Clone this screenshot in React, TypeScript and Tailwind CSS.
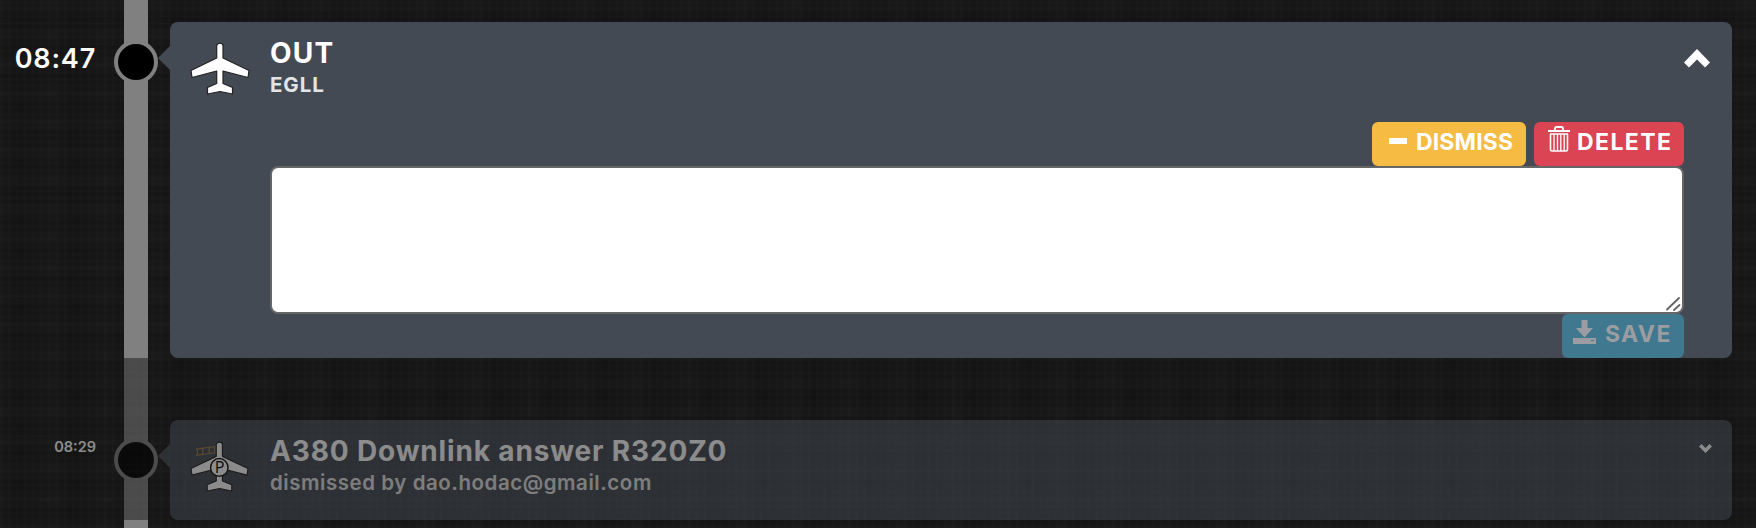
import type { ReactNode } from "react";

function Plane({ parked = false }: { parked?: boolean }) {
  return (
    <svg
      width={parked ? 59 : 60}
      height={parked ? 52 : 54}
      viewBox="0 0 60 54"
      preserveAspectRatio="none"
      className={parked ? "mr-px block shrink-0" : "block shrink-0"}
    >
      {parked && (
        <path
          d="M6 9.500 28 6.500M6 16 28 13M7.500 9V16.500M13 8.500V15.500M19.500 7.500V14.500M25 7V14"
          stroke="#a07c4c"
          strokeWidth="1.200"
          fill="none"
        />
      )}
      <path
        d="M26.700 5C26.700 1.300 33 1.300 33 5V17L59 29.500 58 36.500 33 30V42.500L42.500 46.500V53L30 50.500 17.500 53V46.500L26.700 42.500V30L2 36.500 1 29.500 26.700 17Z"
        fill="#fff"
        stroke="#222"
        strokeWidth="1.2"
        strokeLinejoin="round"
      />
      {parked && (
        <>
          <ellipse cx="29.800" cy="28.500" rx="8.900" ry="9.200" fill="#fff" stroke="#111" strokeWidth="1.500" />
          <text x="30.200" y="34.500" textAnchor="middle" fontSize="16.5" fontFamily="Open Sans, sans-serif" fill="#000">
            P
          </text>
        </>
      )}
    </svg>
  );
}

function Entry({ time, timeClass, dim, children }: { time: string; timeClass: string; dim?: boolean; children: ReactNode }) {
  return (
    <section className={dim ? "flex pt-[62px] opacity-50" : "flex pt-[22px]"}>
      <div className={`w-[124px] pr-7 text-right whitespace-nowrap ${timeClass}`}>{time}</div>
      <div className={dim ? "-mt-[62px] w-6 bg-[#808080] pt-20" : "-mt-[22px] w-6 bg-[#808080] pt-10"}>
        <div className="-ml-[10px] size-11 rounded-full border-4 border-[#808080] bg-black" />
      </div>
      <svg width="12" height="24" viewBox="0 0 12 24" className="mt-6 ml-[10px] shrink-0">
        <path d="M12 0V24L0 12Z" fill="#444a53" />
      </svg>
      {children}
    </section>
  );
}

export default function App() {
  return (
    <main
      className="flex h-[528px] w-[1756px] flex-col overflow-hidden bg-[#161616] bg-[repeating-linear-gradient(0deg,#ffffff03_0px,transparent_2px,#00000010_5px,transparent_7px),repeating-linear-gradient(0deg,#ffffff03_0px,transparent_7px,#0000000c_18px,#ffffff03_29px),repeating-linear-gradient(90deg,#ffffff03_0px,transparent_3px,#00000010_5px,transparent_8px),repeating-linear-gradient(90deg,#ffffff03_0px,#0000000c_19px,transparent_31px,#ffffff03_53px)] text-white [font-family:Inter,sans-serif]"
    >
      <Entry time="08:47" timeClass="pt-[18px] text-[27px] leading-[38px] font-semibold tracking-[0.8px]">
        <article className="h-[336px] w-[1562px] rounded-lg bg-[#444a53]">
          <header className="flex h-[100px] pt-[19px] pl-5">
            <Plane />
            <div className="ml-5 grow">
              <h2 className="-mt-[3px] text-[28px] leading-[30px] font-bold tracking-[1.2px]">OUT</h2>
              <p className="mt-px text-[20.500px] leading-8 font-bold tracking-[0.9px] text-[#e3e4e5]">EGLL</p>
            </div>
            <svg width="26" height="19" viewBox="0 0 26 19" className="mt-2 mr-[22px]">
              <path d="M13 0 26 13.500 21 18.500 13 10.500 5 18.500 0 13.500Z" fill="#fff" />
            </svg>
          </header>
          <div className="ml-[100px] w-[1414px]">
            <div className="flex justify-end gap-2 text-[23px] leading-[40px] font-bold">
              <button className="flex h-11 w-[154px] rounded-md bg-[#f6bb42] pl-[17px]">
                <span className="mt-4 mr-[9px] h-[6px] w-[18px] bg-white" />
                <span className="tracking-[0.15px]">DISMISS</span>
              </button>
              <button className="flex h-11 w-[150px] rounded-md bg-[#da4453] pl-[14px]">
                <svg width="22" height="27" viewBox="0 0 22 27" className="mt-1 mr-[7px]" fill="none" stroke="#fff">
                  <path d="M0 5H22M7 4.500V2.500Q7 1 8.500 1H13.500Q15 1 15 2.500V4.500" strokeWidth="1.800" />
                  <path d="M2 8H20M2.500 8V23.500Q2.500 25 4 25H18Q19.500 25 19.500 23.500V8" strokeWidth="1.600" />
                  <path d="M6 8V25M9.500 8V25M12.800 8V25M16.200 8V25" strokeWidth="1.300" />
                </svg>
                <span className="tracking-[1.4px]">DELETE</span>
              </button>
            </div>
            <div className="relative h-[148px]">
              <textarea aria-label="Comment" className="block size-full resize-none rounded-lg border-2 border-[#666] bg-white text-black" />
              <svg width="16" height="16" viewBox="0 0 16 16" className="absolute right-[3px] bottom-[2px]">
                <path d="M2 13.500 14 2M9 14 14.500 9" stroke="#666" strokeWidth="1.900" strokeLinecap="round" />
              </svg>
            </div>
            <div className="flex justify-end">
              <button className="flex h-11 w-[122px] rounded-md bg-[#40788f] pl-[11px] text-[23px] leading-[40px] font-bold text-[#9b9da2]">
                <svg width="23" height="24" viewBox="0 0 23 24" className="mt-[6px] mr-[9px]">
                  <path fill="currentColor" d="M8.500 0H14.500V8H20L11.500 17.500 3 8H8.500ZM0 18H23V24H0Z" />
                  <path d="M18 20.500H21" stroke="#40788f" />
                </svg>
                <span className="tracking-[1.400px]">SAVE</span>
              </button>
            </div>
          </div>
        </article>
      </Entry>
      <Entry dim time="08:29" timeClass="pt-4 text-[14.5px] leading-[22px] font-semibold">
        <article className="flex h-[100px] w-[1562px] rounded-lg bg-[#444a53] pt-5 pl-5">
          <Plane parked />
          <div className="ml-5 grow">
            <h2 className="-mt-1 text-[28px] leading-[30px] font-bold tracking-[0.85px]">A380 Downlink answer R320Z0</h2>
            <p className="mt-px text-[20.500px] leading-8 font-semibold tracking-[0.55px] text-[#e3e4e5]">dismissed by dao.hodac@gmail.com</p>
          </div>
          <svg width="13" height="9" viewBox="0 0 13 9" className="mt-1 mr-5">
            <path d="M0 2.500 2.500 0 6.500 4 10.500 0 13 2.500 6.500 9Z" fill="#fff" />
          </svg>
        </article>
      </Entry>
      <div className="ml-[124px] h-2 w-6 bg-[#808080]" />
    </main>
  );
}
